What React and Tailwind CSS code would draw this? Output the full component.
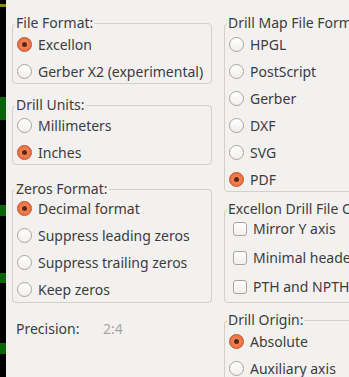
import React from "react";

const font = { fontFamily: '"Noto Sans", "DejaVu Sans", sans-serif' };

const Radio = ({ checked }) =>
  checked ? (
    <span className="w-[15px] h-[15px] shrink-0 rounded-full border border-[#c0532b] bg-[radial-gradient(circle,#f4946b_0%,#ee6e3e_70%)] flex items-center justify-center">
      <span className="w-[5px] h-[5px] rounded-full bg-[#5a2814]" />
    </span>
  ) : (
    <span className="w-[15px] h-[15px] shrink-0 rounded-full border border-[#a9a5a0] bg-linear-to-b from-white to-[#f1efed]" />
  );

const RadioRow = ({ label, checked }) => (
  <div className="h-[27px] flex items-center pl-[4px]">
    <Radio checked={checked} />
    <span className="ml-[6px] whitespace-nowrap">{label}</span>
  </div>
);

const CheckRow = ({ label }) => (
  <div className="h-[29px] flex items-center pl-[8px]">
    <span className="w-[14px] h-[14px] shrink-0 rounded-[3px] border border-[#a9a5a0] bg-linear-to-b from-white to-[#f1efed]" />
    <span className="ml-[6px] whitespace-nowrap">{label}</span>
  </div>
);

const Frame = ({ title, className = "", children }) => (
  <fieldset className={`border border-[#d3cfca] rounded-[4px] min-w-0 ${className}`}>
    <legend className="ml-[2px] px-[1px] leading-[16px] whitespace-nowrap">{title}</legend>
    {children}
  </fieldset>
);

export default function App() {
  return (
    <div
      className="w-[349px] h-[377px] overflow-hidden flex bg-[#f2f1f0] text-[14px] text-[#3c3c3c]"
      style={font}
    >
      {/* window edge behind the dialog */}
      <div className="w-[6px] shrink-0 bg-black flex flex-col">
        <div className="mt-[4px] h-[3px] bg-[#8a8a14]" />
        <div className="mt-[90px] h-[23px] bg-[#0b640b]" />
        <div className="mt-[85px] h-[11px] bg-[#0b640b]" />
        <div className="mt-[57px] h-[10px] bg-[#0b640b]" />
        <div className="mt-[60px] h-[11px] bg-[#0b640b]" />
      </div>

      <div className="flex pl-[6px] pt-[15px] gap-[12px]">
        {/* left column */}
        <div className="w-[200px] shrink-0 flex flex-col">
          <Frame title="File Format:">
            <div className="-mb-[2px]">
              <RadioRow label="Excellon" checked />
              <RadioRow label="Gerber X2 (experimental)" />
            </div>
          </Frame>
          <Frame title="Drill Units:" className="mt-[13px]">
            <div className="-mt-[1px] -mb-[2px]">
              <RadioRow label="Millimeters" />
              <RadioRow label="Inches" checked />
            </div>
          </Frame>
          <Frame title="Zeros Format:" className="mt-[16px]">
            <div className="-mt-[2px] -mb-[1px]">
              <RadioRow label="Decimal format" checked />
              <RadioRow label="Suppress leading zeros" />
              <RadioRow label="Suppress trailing zeros" />
              <RadioRow label="Keep zeros" />
            </div>
          </Frame>
          <div className="mt-[18px] pl-[4px] flex leading-[16px]">
            <span className="w-[87px]">Precision:</span>
            <span className="text-[#a8a6a3]">2:4</span>
          </div>
        </div>

        {/* right column */}
        <div className="w-[200px] shrink-0 flex flex-col">
          <Frame title="Drill Map File Format:">
            <div className="-mb-[2px]">
              <RadioRow label="HPGL" />
              <RadioRow label="PostScript" />
              <RadioRow label="Gerber" />
              <RadioRow label="DXF" />
              <RadioRow label="SVG" />
              <RadioRow label="PDF" checked />
            </div>
          </Frame>
          <Frame title="Excellon Drill File Options:" className="mt-[9px] pb-[1px]">
            <div className="-mt-[3px]">
              <CheckRow label="Mirror Y axis" />
              <CheckRow label="Minimal header" />
              <CheckRow label="PTH and NPTH in single file" />
            </div>
          </Frame>
          <Frame title="Drill Origin:" className="mt-[9px]">
            <RadioRow label="Absolute" checked />
            <RadioRow label="Auxiliary axis" />
          </Frame>
        </div>
      </div>
    </div>
  );
}
